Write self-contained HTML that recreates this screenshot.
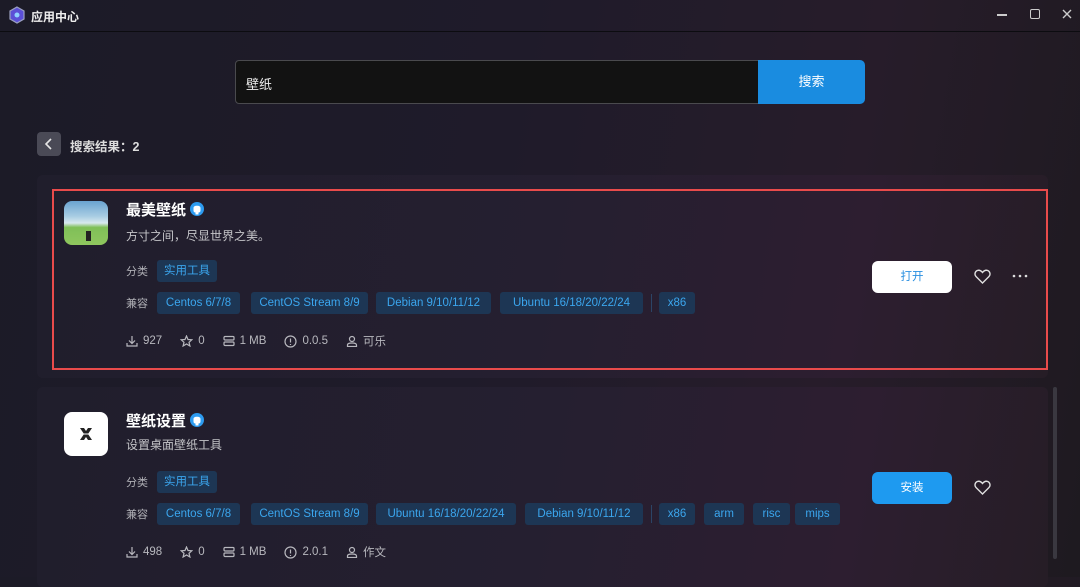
<!DOCTYPE html>
<html><head><meta charset="utf-8"><style>
*{margin:0;padding:0;box-sizing:border-box}
body{width:1080px;height:577px;overflow:hidden;font-family:"Liberation Sans","Noto Sans CJK SC",sans-serif;color:#e6e6e6;background:linear-gradient(100deg,#1c1b27 0%,#1f1b2a 45%,#271c2a 75%,#1e1a20 100%);position:relative}
.a{position:absolute}
.tb{left:0;top:0;width:1080px;height:32px;border-bottom:1px solid #0c0c10}
.card{left:37px;width:1011px;border-radius:6px;background:linear-gradient(100deg,#201e2c 0%,#251f30 50%,#2d1e30 80%,#261d26 100%)}
.t{font-size:15px;font-weight:bold;color:#fff}
.d{font-size:12px;color:#c4c4c8}
.lb{font-size:11px;color:#b0b0b6}
.tag{height:22px;line-height:22px;font-size:11.5px;color:#3ba6ee;background:#1d3654;border-radius:3px;text-align:center}
.st{font-size:11.5px;color:#b8b8be;display:flex;align-items:center}
.st span{display:flex;align-items:center;gap:5px;margin-right:18px}
.st svg{stroke:#b8b8be;fill:none;stroke-width:1.2}
.btn{width:80px;height:32px;border-radius:6px;text-align:center;line-height:32px;font-size:11.5px}
.vd{width:1px;height:18px;background:#2c4466}
</style></head><body>
<div class="a tb"></div>
<svg class="a" style="left:9px;top:6px" width="16" height="18" viewBox="0 0 16 18"><path d="M8 1 L15 5 V13 L8 17 L1 13 V5Z" fill="#5b4fd6" stroke="#9aa0c0" stroke-width="1.2"/><circle cx="8" cy="9" r="2.5" fill="#8fd0ff"/></svg>
<div class="a" style="left:31px;top:8px;font-size:12px;font-weight:bold;color:#eee">应用中心</div>
<div class="a" style="left:997px;top:14px;width:10px;height:1.5px;background:#ccc"></div>
<div class="a" style="left:1030px;top:9px;width:10px;height:10px;border:1.5px solid #ccc;border-radius:2px"></div>
<svg class="a" style="left:1062px;top:9px" width="10" height="10"><path d="M1 1L9 9M9 1L1 9" stroke="#ccc" stroke-width="1.4"/></svg>

<div class="a" style="left:235px;top:60px;width:530px;height:44px;background:#121212;border:1px solid #4a4a4e;border-radius:4px"></div>
<div class="a" style="left:246px;top:74px;font-size:13px;color:#eee">壁纸</div>
<div class="a" style="left:758px;top:60px;width:107px;height:44px;background:#1a8ce0;border-radius:0 5px 5px 0;color:#fff;font-size:13px;text-align:center;line-height:44px">搜索</div>

<div class="a" style="left:37px;top:132px;width:24px;height:24px;background:#4a4a56;border-radius:4px"></div>
<svg class="a" style="left:37px;top:132px" width="24" height="24"><path d="M14 7L9 12L14 17" stroke="#e6e6e6" stroke-width="1.6" fill="none"/></svg>
<div class="a" style="left:70px;top:136px;font-size:12.5px;font-weight:bold;color:#ddd">搜索结果：2</div>

<!-- card 1 -->
<div class="a card" style="top:175px;height:203px"></div>
<div class="a" style="left:52px;top:189px;width:996px;height:181px;border:2px solid #e94b4b"></div>
<div class="a" style="left:64px;top:201px;width:44px;height:44px;border-radius:8px;background:linear-gradient(180deg,#6aa3d0 0%,#a9cde3 35%,#d8e9ef 50%,#7fbf58 60%,#8fc75e 100%);overflow:hidden"><div class="a" style="left:22px;top:30px;width:5px;height:10px;background:#222"></div></div>
<div class="a t" style="left:126px;top:199px">最美壁纸</div>
<svg class="a" style="left:190px;top:202px" width="14" height="14" viewBox="0 0 14 14"><circle cx="7" cy="7" r="7" fill="#2d9bf0"/><path d="M5.5 12.5V10.5C4 10.5 3.5 9.5 3.5 8.5V6C3.5 4.8 4.5 3.8 7 3.8S10.5 4.8 10.5 6V8.5C10.5 9.5 10 10.5 8.5 10.5V12.5Z" fill="#fff"/></svg>
<div class="a d" style="left:126px;top:227px">方寸之间，尽显世界之美。</div>
<div class="a lb" style="left:126px;top:263px">分类</div>
<div class="a tag" style="left:157px;top:260px;width:60px">实用工具</div>
<div class="a lb" style="left:126px;top:295px">兼容</div>
<div class="a tag" style="left:157px;top:292px;width:83px">Centos 6/7/8</div>
<div class="a tag" style="left:251px;top:292px;width:117px">CentOS Stream 8/9</div>
<div class="a tag" style="left:376px;top:292px;width:115px">Debian 9/10/11/12</div>
<div class="a tag" style="left:500px;top:292px;width:143px">Ubuntu 16/18/20/22/24</div>
<div class="a vd" style="left:651px;top:294px"></div>
<div class="a tag" style="left:659px;top:292px;width:36px">x86</div>
<div class="a st" style="left:126px;top:333px">
<span><svg width="12" height="12"><path d="M6 1V8M3 5.5L6 8.5L9 5.5M1 8V11H11V8"/></svg>927</span>
<span><svg width="13" height="12"><path d="M6.5 1L8 4.5L11.8 4.8L9 7.3L9.9 11L6.5 9L3.1 11L4 7.3L1.2 4.8L5 4.5Z"/></svg>0</span>
<span><svg width="12" height="12"><rect x="1" y="1.5" width="10" height="3.5" rx="1"/><rect x="1" y="7" width="10" height="3.5" rx="1"/></svg>1 MB</span>
<span><svg width="13" height="13"><circle cx="6.5" cy="6.5" r="5.5"/><path d="M6.5 3.5V7.5M6.5 9V10"/></svg>0.0.5</span>
<span><svg width="12" height="12"><circle cx="6" cy="4" r="2.5"/><path d="M1.5 11.5V10C1.5 8.5 3 8 6 8S10.5 8.5 10.5 10V11.5Z"/></svg>可乐</span></div>
<div class="a btn" style="left:872px;top:261px;background:#fff;color:#2a8fe0">打开</div>
<svg class="a" style="left:974px;top:269px" width="17" height="15" viewBox="0 0 17 15"><path d="M8.5 14L2 7.5C0.3 5.8 0.8 2.5 3.3 1.5C5.3 0.8 7.3 2 8.5 3.5C9.7 2 11.7 0.8 13.7 1.5C16.2 2.5 16.7 5.8 15 7.5Z" fill="none" stroke="#e0e0e0" stroke-width="1.4"/></svg>
<svg class="a" style="left:1012px;top:274px" width="16" height="4"><circle cx="2" cy="2" r="1.3" fill="#ddd"/><circle cx="8" cy="2" r="1.3" fill="#ddd"/><circle cx="14" cy="2" r="1.3" fill="#ddd"/></svg>

<!-- card 2 -->
<div class="a card" style="top:387px;height:200px"></div>
<div class="a" style="left:64px;top:412px;width:44px;height:44px;border-radius:8px;background:#fff"></div>
<svg class="a" style="left:78px;top:426px" width="16" height="16" viewBox="0 0 16 16"><path d="M2 2H6L8 5L10 2H14L10 8L14 14H10L8 11L6 14H2L6 8Z" fill="#222"/><path d="M4 8H12" stroke="#fff" stroke-width="1"/></svg>
<div class="a t" style="left:126px;top:410px">壁纸设置</div>
<svg class="a" style="left:190px;top:413px" width="14" height="14" viewBox="0 0 14 14"><circle cx="7" cy="7" r="7" fill="#2d9bf0"/><path d="M5.5 12.5V10.5C4 10.5 3.5 9.5 3.5 8.5V6C3.5 4.8 4.5 3.8 7 3.8S10.5 4.8 10.5 6V8.5C10.5 9.5 10 10.5 8.5 10.5V12.5Z" fill="#fff"/></svg>
<div class="a d" style="left:126px;top:436px">设置桌面壁纸工具</div>
<div class="a lb" style="left:126px;top:474px">分类</div>
<div class="a tag" style="left:157px;top:471px;width:60px">实用工具</div>
<div class="a lb" style="left:126px;top:506px">兼容</div>
<div class="a tag" style="left:157px;top:503px;width:83px">Centos 6/7/8</div>
<div class="a tag" style="left:251px;top:503px;width:117px">CentOS Stream 8/9</div>
<div class="a tag" style="left:376px;top:503px;width:140px">Ubuntu 16/18/20/22/24</div>
<div class="a tag" style="left:525px;top:503px;width:118px">Debian 9/10/11/12</div>
<div class="a vd" style="left:651px;top:505px"></div>
<div class="a tag" style="left:659px;top:503px;width:36px">x86</div>
<div class="a tag" style="left:704px;top:503px;width:40px">arm</div>
<div class="a tag" style="left:753px;top:503px;width:37px">risc</div>
<div class="a tag" style="left:795px;top:503px;width:45px">mips</div>
<div class="a st" style="left:126px;top:544px">
<span><svg width="12" height="12"><path d="M6 1V8M3 5.5L6 8.5L9 5.5M1 8V11H11V8"/></svg>498</span>
<span><svg width="13" height="12"><path d="M6.5 1L8 4.5L11.8 4.8L9 7.3L9.9 11L6.5 9L3.1 11L4 7.3L1.2 4.8L5 4.5Z"/></svg>0</span>
<span><svg width="12" height="12"><rect x="1" y="1.5" width="10" height="3.5" rx="1"/><rect x="1" y="7" width="10" height="3.5" rx="1"/></svg>1 MB</span>
<span><svg width="13" height="13"><circle cx="6.5" cy="6.5" r="5.5"/><path d="M6.5 3.5V7.5M6.5 9V10"/></svg>2.0.1</span>
<span><svg width="12" height="12"><circle cx="6" cy="4" r="2.5"/><path d="M1.5 11.5V10C1.5 8.5 3 8 6 8S10.5 8.5 10.5 10V11.5Z"/></svg>作文</span></div>
<div class="a btn" style="left:872px;top:472px;background:#1e9af0;color:#fff">安装</div>
<svg class="a" style="left:974px;top:480px" width="17" height="15" viewBox="0 0 17 15"><path d="M8.5 14L2 7.5C0.3 5.8 0.8 2.5 3.3 1.5C5.3 0.8 7.3 2 8.5 3.5C9.7 2 11.7 0.8 13.7 1.5C16.2 2.5 16.7 5.8 15 7.5Z" fill="none" stroke="#e0e0e0" stroke-width="1.4"/></svg>
<div class="a" style="left:1053px;top:387px;width:4px;height:172px;background:#3a3840;border-radius:2px"></div>
</body></html>
